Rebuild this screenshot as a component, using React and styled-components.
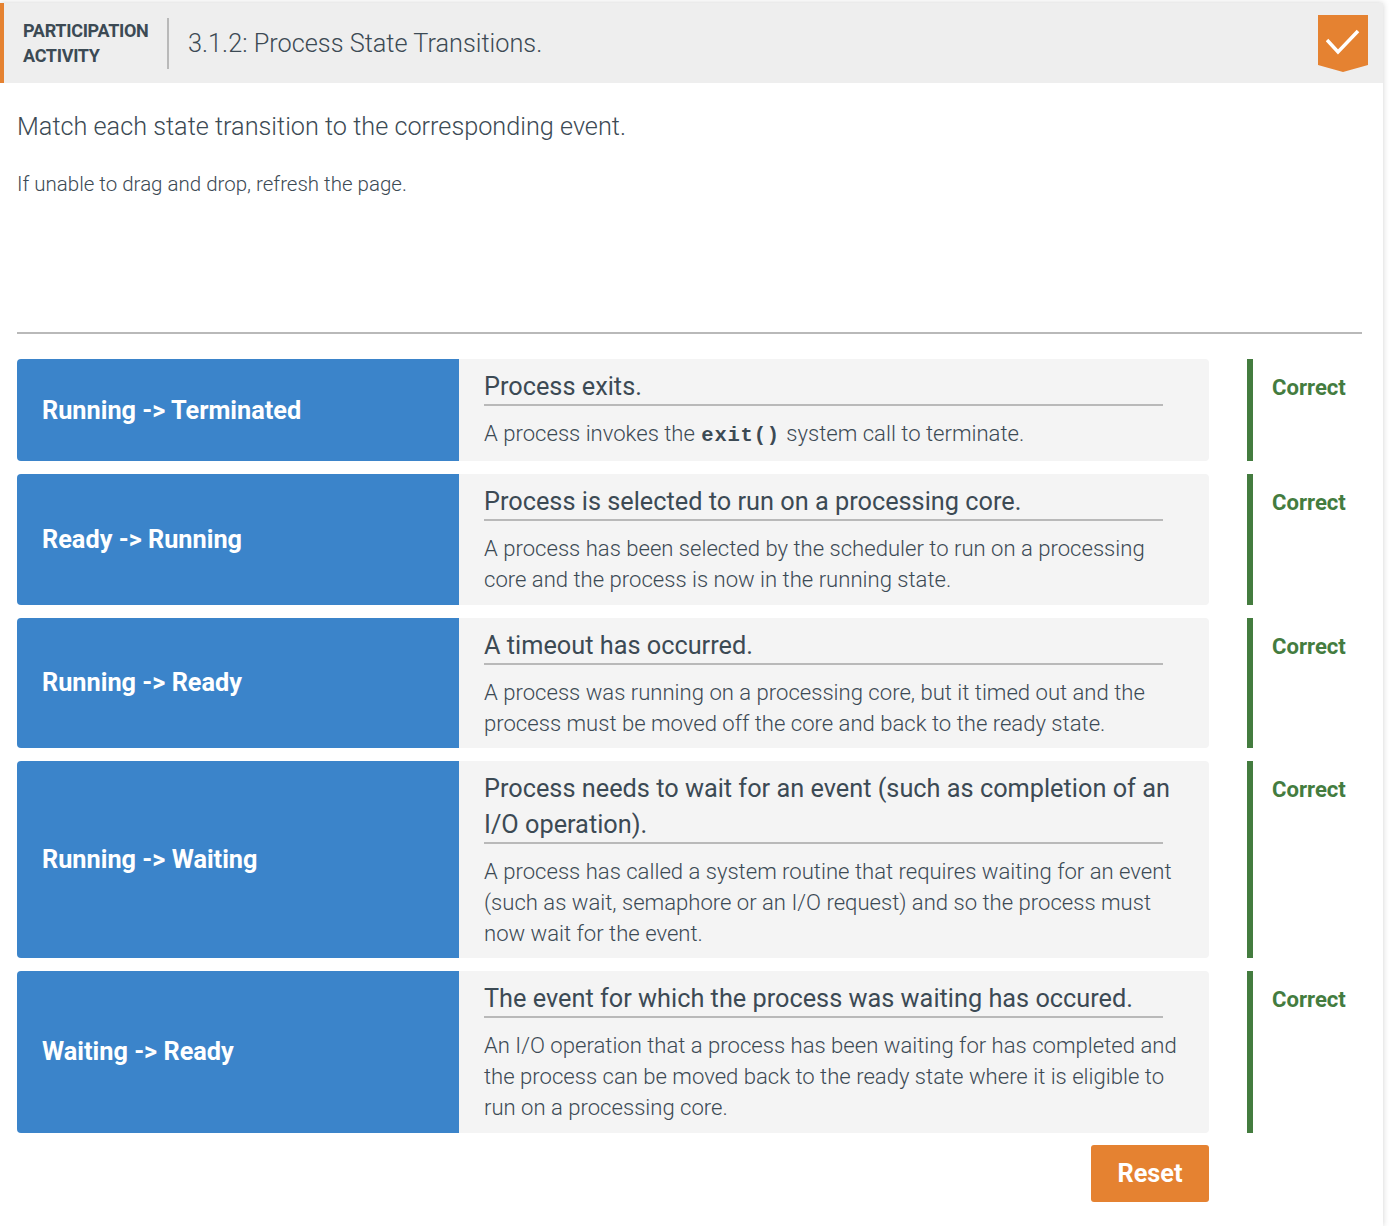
import React from "react";
import styled, { createGlobalStyle } from "styled-components";

const GlobalStyle = createGlobalStyle`
  html, body {
    margin: 0;
    padding: 0;
    background: #fff;
    font-family: Roboto, "Liberation Sans", sans-serif;
    color: #3c4a54;
  }
  * {
    box-sizing: border-box;
  }
`;

const Panel = styled.section`
  width: 1383px;
  height: 1223px;
  margin-top: 3px;
  background: #fff;
  box-shadow: 0 0 6px rgba(0, 0, 0, 0.18);
`;

const Header = styled.header`
  height: 80px;
  background: #eeeeee;
  border-left: 4px solid #e58231;
  display: flex;
  align-items: center;
  padding: 0 15px 0 19px;
`;

const Label = styled.div`
  width: 146px;
  height: 51px;
  border-right: 2px solid #b9b9b9;
  font-size: 18px;
  font-weight: 700;
  line-height: 25px;
  color: #3c4a54;
  letter-spacing: -0.3px;
`;

const Title = styled.h1`
  flex: 1;
  margin: 0 0 0 19px;
  font-size: 25.3px;
  font-weight: 300;
  color: #3c4a54;
`;

const Badge = styled.div`
  width: 50px;
  height: 57px;
  margin-top: 1px;
  background: #e58231;
  clip-path: polygon(0 0, 100% 0, 100% 50px, 50% 100%, 0 50px);
  display: flex;
  justify-content: center;
  padding-top: 14px;
`;

const Body = styled.div`
  padding: 0 21px 0 17px;
`;

const Instructions = styled.p`
  margin: 26px 0 0;
  font-size: 25.25px;
  font-weight: 300;
  line-height: 35px;
`;

const Hint = styled.p`
  margin: 25px 0 0;
  font-size: 20.5px;
  font-weight: 300;
  line-height: 30px;
`;

const Divider = styled.hr`
  margin: 133px 0 25px;
  border: 0;
  height: 2px;
  background: #b9b9b9;
`;

const Rows = styled.div`
  display: flex;
  flex-direction: column;
  gap: 12.8px;
`;

const Row = styled.div`
  display: flex;
`;

const Term = styled.div`
  width: 442px;
  flex: none;
  background: #3b84ca;
  color: #fff;
  border-radius: 4px 0 0 4px;
  display: flex;
  align-items: center;
  padding-left: 25px;
  font-size: 25.3px;
  font-weight: 700;
`;

const Definition = styled.div`
  width: 750px;
  flex: none;
  background: #f4f4f4;
  border-radius: 0 4px 4px 0;
  padding: 10px 25px 9.55px;
`;

const DefinitionTitle = styled.div`
  font-size: 25.3px;
  font-weight: 400;
  line-height: 35.4px;
  color: #3c4a54;
`;

const DefinitionRule = styled.div`
  width: 97%;
  height: 2px;
  margin-bottom: 12px;
  background: #b9b9b9;
`;

const DefinitionText = styled.div`
  font-size: 22.1px;
  font-weight: 300;
  line-height: 30.9px;
  color: #3c4a54;
`;

const Code = styled.code`
  font-family: "Liberation Mono", monospace;
  font-weight: 700;
  font-size: 20.5px;
  letter-spacing: 0.8px;
  margin: 0 1px;
  vertical-align: 0.7px;
`;

const Result = styled.div`
  margin-left: 38px;
  width: 115px;
  flex: none;
  border-left: 6px solid #447c3f;
  padding: 13px 0 0 19px;
  color: #447c3f;
  font-size: 22.1px;
  font-weight: 700;
  line-height: 30px;
`;

const Footer = styled.div`
  width: 1192px;
  display: flex;
  justify-content: flex-end;
  margin-top: 12.7px;
`;

const ResetButton = styled.button`
  width: 118px;
  height: 57px;
  border: 0;
  border-radius: 3px;
  background: #e58231;
  color: #fff;
  font-family: inherit;
  font-size: 25.3px;
  font-weight: 700;
`;

const rows = [
  {
    term: "Running -> Terminated",
    title: "Process exits.",
    text: (
      <>
        A process invokes the <Code>exit()</Code> system call to terminate.
      </>
    ),
  },
  {
    term: "Ready -> Running",
    title: "Process is selected to run on a processing core.",
    text: "A process has been selected by the scheduler to run on a processing core and the process is now in the running state.",
  },
  {
    term: "Running -> Ready",
    title: "A timeout has occurred.",
    text: "A process was running on a processing core, but it timed out and the process must be moved off the core and back to the ready state.",
  },
  {
    term: "Running -> Waiting",
    title: "Process needs to wait for an event (such as completion of an I/O operation).",
    text: "A process has called a system routine that requires waiting for an event (such as wait, semaphore or an I/O request) and so the process must now wait for the event.",
  },
  {
    term: "Waiting -> Ready",
    title: "The event for which the process was waiting has occured.",
    text: "An I/O operation that a process has been waiting for has completed and the process can be moved back to the ready state where it is eligible to run on a processing core.",
  },
];

export default function App() {
  return (
    <>
      <GlobalStyle />
      <Panel>
        <Header>
          <Label>
            PARTICIPATION
            <br />
            ACTIVITY
          </Label>
          <Title>3.1.2: Process State Transitions.</Title>
          <Badge>
            <svg width="34" height="26" viewBox="0 0 34 26">
              <path d="M1 11 L12 23 L32 2" fill="none" stroke="#fff" strokeWidth="3.5" />
            </svg>
          </Badge>
        </Header>
        <Body>
          <Instructions>Match each state transition to the corresponding event.</Instructions>
          <Hint>If unable to drag and drop, refresh the page.</Hint>
          <Divider />
          <Rows>
            {rows.map((row) => (
              <Row key={row.term}>
                <Term>{row.term}</Term>
                <Definition>
                  <DefinitionTitle>{row.title}</DefinitionTitle>
                  <DefinitionRule />
                  <DefinitionText>{row.text}</DefinitionText>
                </Definition>
                <Result>Correct</Result>
              </Row>
            ))}
          </Rows>
          <Footer>
            <ResetButton>Reset</ResetButton>
          </Footer>
        </Body>
      </Panel>
    </>
  );
}
